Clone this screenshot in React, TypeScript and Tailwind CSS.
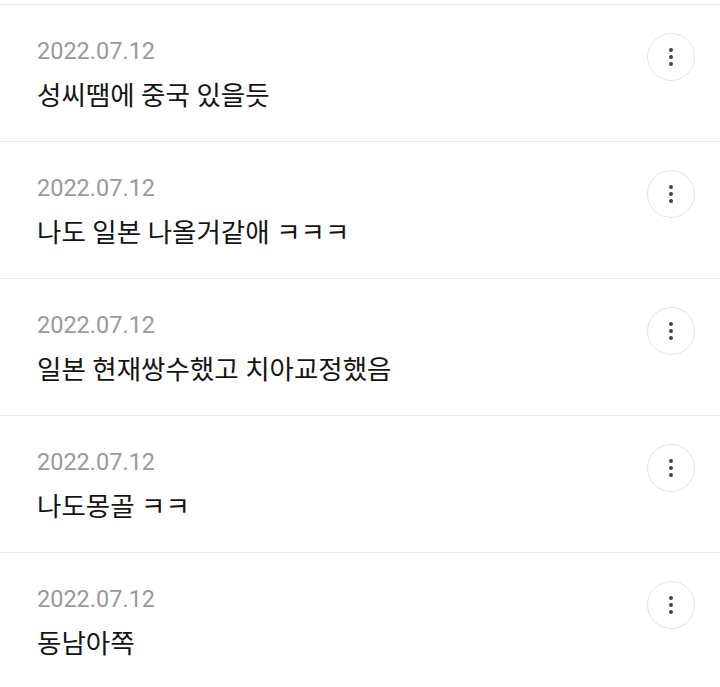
const comments = [
  { date: '2022.07.12', text: '성씨땜에 중국 있을듯' },
  { date: '2022.07.12', text: '나도 일본 나올거같애 ㅋㅋㅋ' },
  { date: '2022.07.12', text: '일본 현재쌍수했고 치아교정했음' },
  { date: '2022.07.12', text: '나도몽골 ㅋㅋ' },
  { date: '2022.07.12', text: '동남아쪽' },
];

function MoreButton() {
  return (
    <button className="flex h-[48px] w-[48px] flex-col items-center justify-center gap-[3px] rounded-full border border-[#e4e4e4] bg-white">
      <span className="h-[4px] w-[4px] rounded-full bg-[#444]" />
      <span className="h-[4px] w-[4px] rounded-full bg-[#444]" />
      <span className="h-[4px] w-[4px] rounded-full bg-[#444]" />
    </button>
  );
}

function CommentRow({ date, text }) {
  return (
    <div className="flex h-[137px] items-start justify-between border-t border-[#e8e8e8] pl-[37px] pr-[25px]">
      <div className="pt-[30px]">
        <p className="text-[23.5px] leading-[32px] text-[#9a9a9a]">{date}</p>
        <p className="mt-[10px] text-[26.5px] leading-[38px] text-[#141414]">{text}</p>
      </div>
      <div className="pt-[28px]">
        <MoreButton />
      </div>
    </div>
  );
}

export default function App() {
  return (
    <div
      className="h-[687px] w-[720px] overflow-hidden bg-white"
      style={{ fontFamily: "Roboto, 'Noto Sans CJK KR', sans-serif" }}
    >
      <div className="h-[4px]" />
      {comments.map((c, i) => (
        <CommentRow key={i} date={c.date} text={c.text} />
      ))}
    </div>
  );
}
